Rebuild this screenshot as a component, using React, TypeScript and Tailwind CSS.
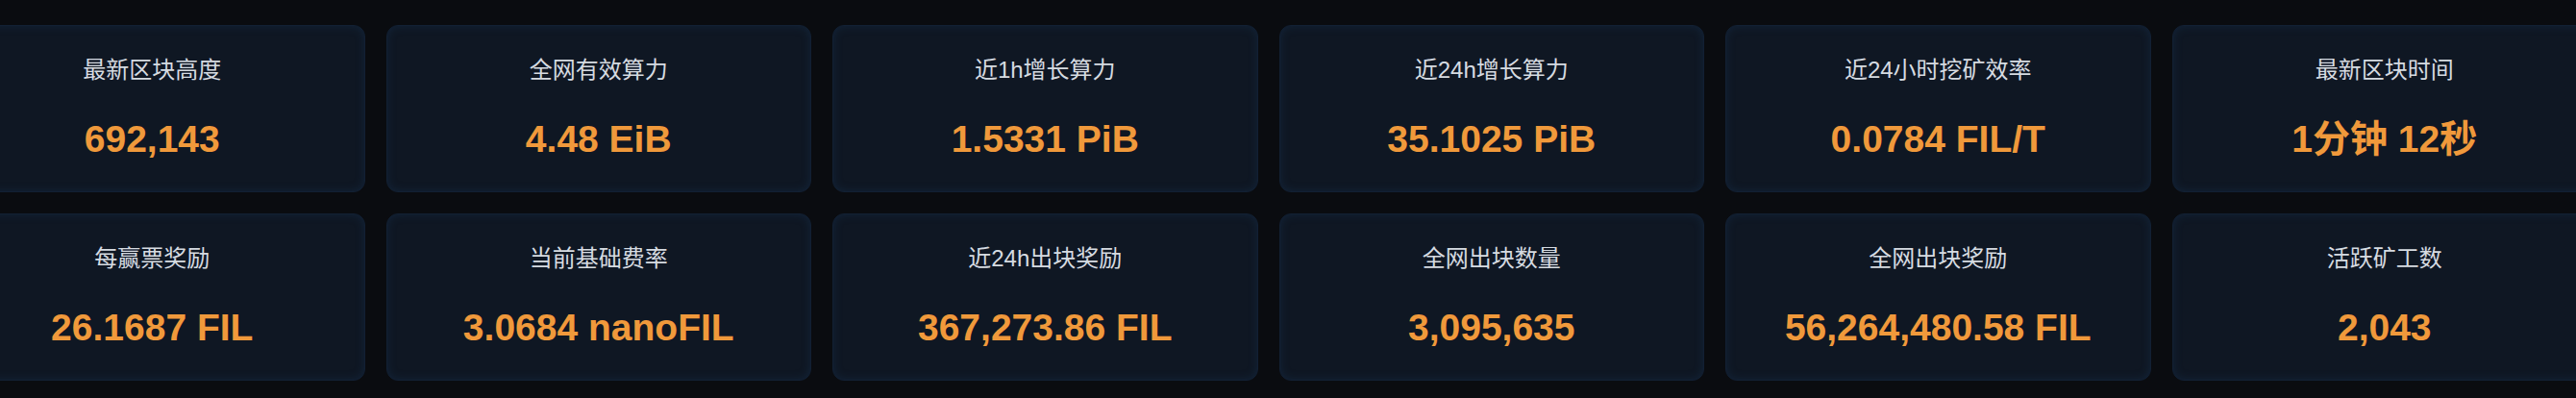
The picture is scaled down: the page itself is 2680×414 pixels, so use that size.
import React from 'react';

type Stat = { label: string; value: string };

const stats: Stat[] = [
  { label: '最新区块高度', value: '692,143' },
  { label: '全网有效算力', value: '4.48 EiB' },
  { label: '近1h增长算力', value: '1.5331 PiB' },
  { label: '近24h增长算力', value: '35.1025 PiB' },
  { label: '近24小时挖矿效率', value: '0.0784 FIL/T' },
  { label: '最新区块时间', value: '1分钟 12秒' },
  { label: '每赢票奖励', value: '26.1687 FIL' },
  { label: '当前基础费率', value: '3.0684 nanoFIL' },
  { label: '近24h出块奖励', value: '367,273.86 FIL' },
  { label: '全网出块数量', value: '3,095,635' },
  { label: '全网出块奖励', value: '56,264,480.58 FIL' },
  { label: '活跃矿工数', value: '2,043' },
];

const StatCard: React.FC<{ stat: Stat }> = ({ stat }) => (
  <div className="h-[174px] rounded-[12px] border border-[#122033] bg-[#0f1723] shadow-[inset_0_0_10px_rgba(26,58,92,0.4)] flex flex-col items-center">
    {/* Titel */}
    <div className="mt-[34px] text-[24px] leading-[24px] text-[#d6dbe1] font-['Liberation_Sans','Noto_Sans_CJK_SC',sans-serif]">
      {stat.label}
    </div>
    {/* Wert */}
    <div className="mt-[40px] text-[39px] leading-[39px] font-bold text-[#f0993b] font-['Liberation_Sans','Noto_Sans_CJK_SC',sans-serif] whitespace-nowrap">
      {stat.value}
    </div>
  </div>
);

export default function App() {
  return (
    <div className="w-[2680px] h-[414px] bg-[#0a0c10] overflow-hidden pt-[26px]">
      <div className="ml-[-63px] grid grid-cols-[repeat(6,442.5px)] gap-x-[22px] gap-y-[22px]">
        {stats.map((s) => (
          <StatCard key={s.label} stat={s} />
        ))}
      </div>
    </div>
  );
}
